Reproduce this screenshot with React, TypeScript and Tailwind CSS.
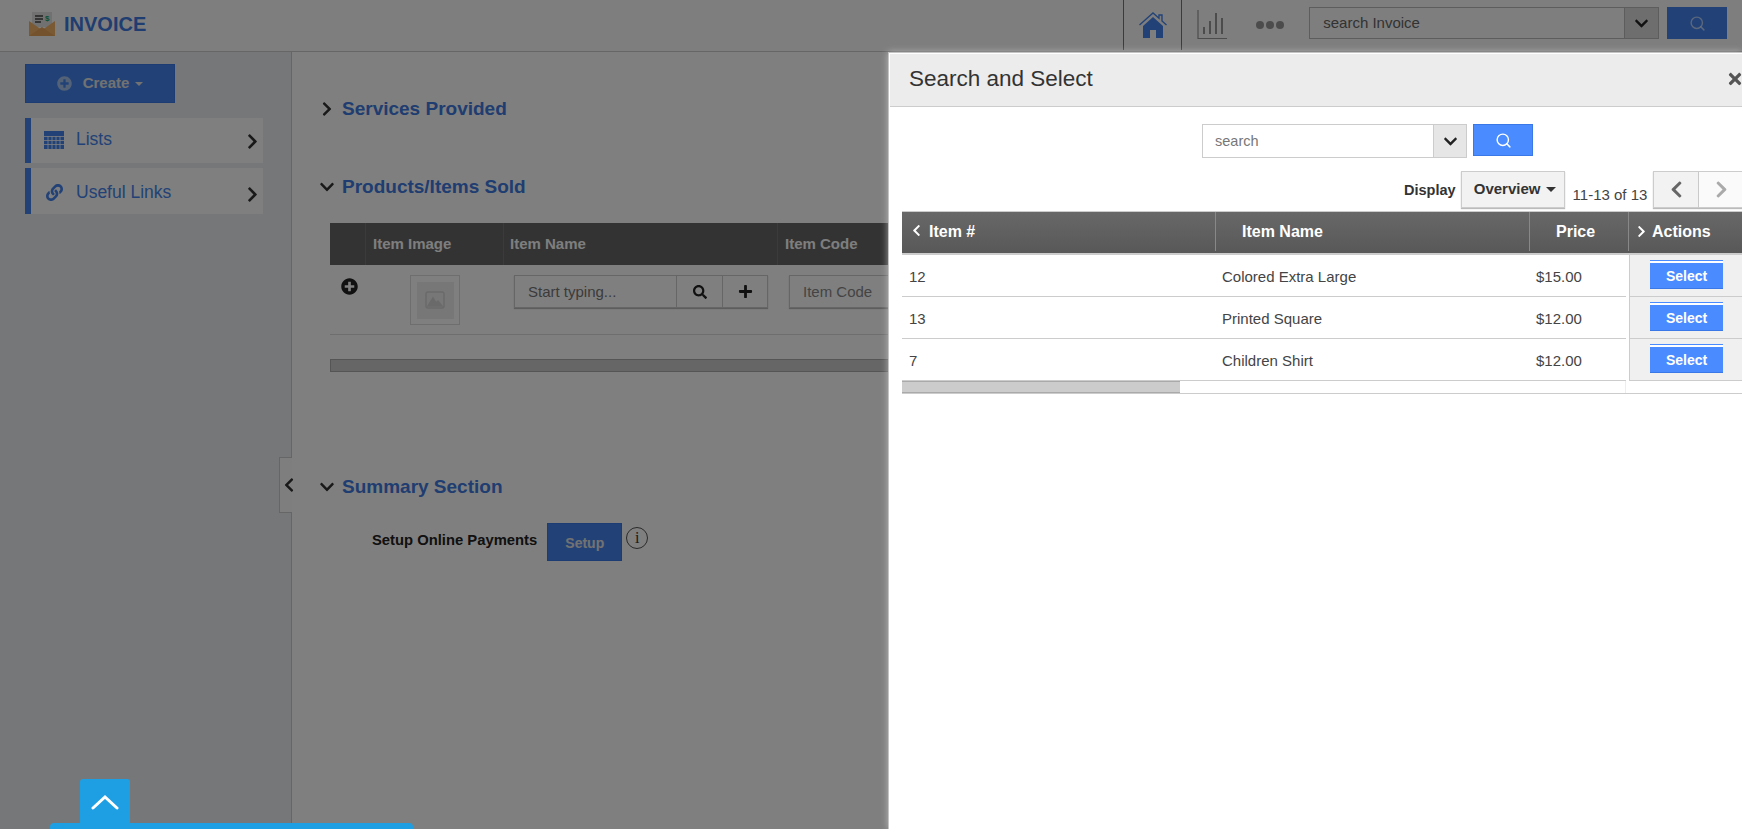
import { Search } from 'lucide-react'
import { FaChevronDown, FaChevronLeft, FaChevronRight, FaLink, FaPlus, FaPlusCircle, FaSearch, FaTimes } from 'react-icons/fa'

const rows = [
  { id: '12', name: 'Colored Extra Large', price: '$15.00' },
  { id: '13', name: 'Printed Square', price: '$12.00' },
  { id: '7', name: 'Children Shirt', price: '$12.00' },
]

function Logo() {
  return (
    <svg width="26" height="24" viewBox="0 0 26 24">
      <rect x="3" y="0" width="20" height="15" fill="#e3e3e3" />
      <path d="M6 4h8M6 7h8M6 10h6" stroke="#444" strokeWidth="1.4" />
      <text x="16" y="9" fontSize="8" fontWeight="700" fill="#16a36b" fontFamily="Liberation Sans">$</text>
      <path d="M0 9 L13 18 L26 9 V24 H0Z" fill="#f2b56b" />
      <path d="M0 24 L13 15 L26 24Z" fill="#e8a55a" />
    </svg>
  )
}

function HomeIcon() {
  return (
    <svg width="28" height="26" viewBox="0 0 28 26" fill="#4585ee">
      <path d="M0.5 13 L14 1 L20 6.3 V3 H23 V9 L27.5 13" fill="none" stroke="#4585ee" strokeWidth="1.4" />
      <path d="M14 5 L24 14 V26 H17 V18 H11 V26 H4 V14Z" />
    </svg>
  )
}

function ChartIcon() {
  return (
    <svg width="30" height="30" viewBox="0 0 30 30" fill="none" stroke="#999" strokeWidth="2">
      <path d="M1 0V28.5H30" strokeWidth="1.2" />
      <path d="M7 24V17M13 24V11M19 24V3M25 24V8" />
    </svg>
  )
}

function CalendarIcon() {
  return (
    <svg width="20" height="18" viewBox="0 0 20 18">
      <rect width="20" height="18" fill="#4585ee" />
      <path d="M0 5.5H20M0 9.5H20M0 13.5H20M4 5V18M8 5V18M12 5V18M16 5V18" stroke="#fff" strokeWidth="0.8" />
    </svg>
  )
}

function SideItem({ icon, label, className }: { icon: React.ReactNode; label: string; className: string }) {
  return (
    <div className={`flex items-center border-l-[6px] border-[#4585ee] bg-[#fefefe] pl-[13px] pr-[2px] ${className}`}>
      <span className="flex w-[20px] justify-center">{icon}</span>
      <span className="ml-[12px] flex-1 text-[17.5px] text-[#4585ee]">{label}</span>
      <FaChevronRight className="mt-[4px] text-[17px] text-[#333]" />
    </div>
  )
}

function SectionTitle({ open, title, className }: { open?: boolean; title: string; className: string }) {
  return (
    <div className={`-ml-px flex items-center ${className}`}>
      <span className="flex w-[23px] justify-start">
        {open ? <FaChevronDown className="text-[16px] text-[#333]" /> : <FaChevronRight className="text-[16px] text-[#333]" />}
      </span>
      <h2 className="text-[19px] font-bold text-[#3f7ae0]">{title}</h2>
    </div>
  )
}

export default function App() {
  return (
    <div className="relative h-screen w-screen overflow-hidden bg-white font-['Liberation_Sans',Arial,sans-serif] text-[14px]">
      {/* page under the dim layer */}
      <header className="flex h-[52px] items-start border-b border-[#ccc] bg-[#fdfdfd] pl-[29px]">
        <div className="mt-[9px] flex items-center">
          <Logo />
          <span className="ml-[9px] text-[20px] font-bold text-[#3f7ae0]">INVOICE</span>
        </div>
        <div className="ml-[977px] flex h-[50px]">
          <div className="flex w-[59px] items-center justify-center border-x border-[#777]">
            <HomeIcon />
          </div>
          <div className="ml-[15px] flex items-center">
            <ChartIcon />
          </div>
          <div className="ml-[29px] flex items-center gap-[2px]">
            <span className="h-[8px] w-[8px] rounded-full bg-[#999]" />
            <span className="h-[8px] w-[8px] rounded-full bg-[#999]" />
            <span className="h-[8px] w-[8px] rounded-full bg-[#999]" />
          </div>
          <div className="ml-[25px] mt-[7px] flex h-[32px] w-[350px] border border-[#bbb]">
            <span className="flex-1 pl-[13px] text-[15px] leading-[30px] text-[#666]">search Invoice</span>
            <span className="flex w-[34px] items-center justify-center border-l border-[#bbb] bg-[#ddd]">
              <FaChevronDown className="text-[15px] text-[#222]" />
            </span>
          </div>
          <div className="ml-[8px] mt-[7px] flex h-[32px] w-[60px] items-center justify-center bg-[#4585ee]">
            <Search size={17} className="text-white/60" />
          </div>
        </div>
      </header>

      <div className="flex h-[calc(100vh-52px)]">
        <aside className="relative w-[292px] shrink-0 border-r border-[#ccc] bg-[#eceef2] pl-[25px] pt-[12px]">
          <div className="flex h-[39px] w-[150px] items-center justify-center border border-[#3a78e8] bg-[#4585ee] text-[15px] font-bold text-[#e4e4e4]">
            <FaPlusCircle className="mr-[11px] text-[15px] text-[#a9c4f0]" />
            Create
            <span className="ml-[6px] h-0 w-0 border-x-[4px] border-t-[4px] border-x-transparent border-t-[#e4e4e4]" />
          </div>
          <SideItem className="mt-[15px] h-[45px] w-[238px] pb-[2px]" icon={<CalendarIcon />} label="Lists" />
          <SideItem
            className="mt-[5px] h-[46px] w-[238px] pt-[2px]"
            icon={<FaLink className="text-[17px] text-[#4585ee]" />}
            label="Useful Links"
          />
          <div className="absolute right-[-1px] top-[405px] flex h-[56px] w-[13px] items-center border border-r-0 border-[#ccc] bg-[#fdfdfd]">
            <FaChevronLeft className="ml-[1px] shrink-0 text-[16px] text-[#333]" />
          </div>
        </aside>

        <main className="min-w-0 flex-1 pl-[28px]">
          <SectionTitle className="mt-[44px] h-[26px]" title="Services Provided" />
          <SectionTitle className="mt-[52px] h-[26px]" open title="Products/Items Sold" />

          <div className="ml-[10px] mt-[23px] w-[900px]">
            <div className="grid h-[42px] grid-cols-[36px_138px_274px_1fr] items-center bg-[#666] text-[15px] font-bold text-[#fcfcfc]">
              <span className="h-full border-r border-[#777]" />
              <span className="flex h-full items-center border-r border-[#777] pl-[7px]">Item Image</span>
              <span className="flex h-full items-center border-r border-[#777] pl-[6px]">Item Name</span>
              <span className="pl-[7px]">Item Code</span>
            </div>
            <div className="flex h-[70px] items-start border-b border-[#ddd]">
              <FaPlusCircle className="ml-[11px] mt-[13px] text-[17px] text-[#222]" />
              <div className="ml-[52px] mt-[10px] flex h-[50px] w-[50px] items-center justify-center border border-[#ddd]">
                <div className="flex h-[37px] w-[37px] items-center justify-center bg-[#eee]">
                  <svg width="20" height="18" viewBox="0 0 20 18" fill="none" stroke="#d5d5d5" strokeWidth="1.5">
                    <rect x="1" y="1" width="18" height="16" rx="2" />
                    <path d="M3 15 L8 7 L11 12 L13 10 L17 15Z" fill="#d5d5d5" />
                  </svg>
                </div>
              </div>
              <div className="ml-[54px] mt-[10px] flex h-[33px] w-[254px] border border-[#ccc] shadow-[0_1px_1px_#bbb]">
                <span className="w-[161px] pl-[13px] text-[15px] leading-[31px] text-[#777]">Start typing...</span>
                <span className="flex w-[46px] items-center justify-center border-l border-[#ccc]">
                  <FaSearch className="text-[14px] text-[#222]" />
                </span>
                <span className="flex flex-1 items-center justify-center border-l border-[#ccc]">
                  <FaPlus className="text-[15px] text-[#222]" />
                </span>
              </div>
              <div className="ml-[21px] mt-[10px] h-[33px] flex-1 border border-[#ccc] pl-[13px] text-[15px] leading-[31px] text-[#888] shadow-[0_1px_1px_#bbb]">
                Item Code
              </div>
            </div>
            <div className="mt-[24px] h-[13px] border border-[#aaa] bg-[#ccc]" />
          </div>

          <SectionTitle className="mt-[102px] h-[26px]" open title="Summary Section" />
          <div className="ml-[52px] mt-[23px] flex items-start">
            <span className="mt-[6px] text-[14.8px] font-bold text-[#222]">Setup Online Payments</span>
            <span className="ml-[10px] flex h-[38px] w-[75px] items-center justify-center border border-[#3a78e8] bg-[#4585ee] pt-[3px] text-[14px] font-bold text-[#e4e4e4]">
              Setup
            </span>
            <span className="ml-[4px] mt-[4px] flex h-[22px] w-[22px] items-center justify-center rounded-full border border-[#555] font-['Liberation_Serif',serif] text-[16px] text-[#333]">
              i
            </span>
          </div>
        </main>
      </div>

      {/* chat launcher stays bright, so it sits above the dim layer */}
      <div className="absolute inset-0 bg-[#00000080]" />
      <div className="absolute bottom-0 left-[80px] flex h-[50px] w-[50px] justify-center rounded-t-[3px] bg-[#1e9fe3] pt-[15px]">
        <svg width="28" height="16" viewBox="0 0 28 16" fill="none" stroke="#fff" strokeWidth="3" strokeLinecap="round">
          <path d="M2 14 L14 3 L26 14" />
        </svg>
      </div>
      <div className="absolute bottom-0 left-[50px] h-[6px] w-[363px] rounded-t-[4px] bg-[#1e9fe3]" />

      {/* slide-over panel */}
      <section className="absolute bottom-0 left-[888px] right-0 top-[52px] overflow-hidden border-l border-t border-[#c4c4c4] bg-white pl-px pt-px shadow-[0_0_7px_rgba(205,205,205,0.7)]">
        <div className="flex h-[53px] items-center justify-between border-b border-[#ccc] bg-[#ececec] pb-[2px] pl-[19px]">
          <span className="text-[22.5px] text-[#333]">Search and Select</span>
          <FaTimes className="mr-[-2px] text-[18px] text-[#555]" />
        </div>

        <div className="ml-[312px] mt-[17px] flex items-start">
          <div className="flex h-[34px] w-[265px] border border-[#ccc]">
            <span className="flex-1 pl-[12px] text-[14.5px] leading-[32px] text-[#777]">search</span>
            <span className="flex w-[33px] items-center justify-center border-l border-[#ccc] bg-[#e6e6e6]">
              <FaChevronDown className="text-[15px] text-[#222]" />
            </span>
          </div>
          <div className="ml-[6px] flex h-[32px] w-[60px] items-center justify-center border border-[#3a78e8] bg-[#4a8cff]">
            <Search size={17} className="text-white" />
          </div>
        </div>

        <div className="ml-[514px] mt-[13px] flex h-[37px] items-start whitespace-nowrap">
          <span className="mt-[9px] text-[14.5px] font-bold text-[#333]">Display</span>
          <div className="ml-[5px] flex h-[37px] w-[104px] shrink-0 items-center justify-center border border-[#ccc] bg-[#f2f2f2] pl-[5px] text-[15px] font-bold text-[#333] shadow-[0_1px_1px_#bbb]">
            Overview
            <span className="ml-[6px] h-0 w-0 border-x-[5px] border-t-[5px] border-x-transparent border-t-[#333]" />
          </div>
          <span className="ml-[8px] mt-[13px] text-[15px] text-[#444]">11-13 of 13</span>
          <div className="ml-[6px] flex h-[37px] w-[46px] shrink-0 items-center justify-center border border-[#ccc] bg-[#f2f2f2] shadow-[0_1px_1px_#bbb]">
            <FaChevronLeft className="text-[19px] text-[#666]" />
          </div>
          <div className="flex h-[37px] w-[46px] shrink-0 items-center justify-center border border-l-0 border-[#ccc] bg-[#fafafa] shadow-[0_1px_1px_#bbb]">
            <FaChevronRight className="text-[19px] text-[#aaa]" />
          </div>
        </div>

        <div className="ml-[12px] mt-[3px] w-[840px]">
          <div className="grid h-[44px] grid-cols-[314px_314px_99px_113px] border-t border-b-[2px] border-[#ccc] bg-gradient-to-b from-[#686868] to-[#585858] pb-[2px] text-[16px] font-bold text-white">
            <span className="flex items-center border-r border-[#888] pl-[8px]">
              <FaChevronLeft className="mb-[2px] text-[13px]" />
              <span className="ml-[6px]">Item #</span>
            </span>
            <span className="flex items-center border-r border-[#888] pl-[26px]">Item Name</span>
            <span className="flex items-center border-r border-[#888] pl-[26px]">Price</span>
            <span className="flex items-center pl-[6px]">
              <FaChevronRight className="mb-[1px] text-[13px]" />
              <span className="ml-[4px]">Actions</span>
            </span>
          </div>
          {rows.map((row) => (
            <div key={row.id} className="grid h-[42px] grid-cols-[724px_116px] text-[15px] text-[#444]">
              <div className="grid grid-cols-[320px_314px_90px] items-center border-b border-[#ccc] pt-[3px]">
                <span className="pl-[7px]">{row.id}</span>
                <span>{row.name}</span>
                <span>{row.price}</span>
              </div>
              <div className="ml-[3px] flex justify-start border-b border-l border-[#ccc] bg-[#f0f0f0] pl-[20px] pt-[6px]">
                <span className="flex h-[28px] w-[73px] items-center justify-center border-t-2 border-b border-t-white border-b-[#3a78e8] bg-[#4a8cff] pt-[1px] text-[14px] font-bold text-white shadow-[0_-1px_0_#4a8cff]">
                  Select
                </span>
              </div>
            </div>
          ))}
          <div className="w-[724px] border-r border-[#eee]">
            <div className="h-[12px] w-[278px] border-y border-[#aaa] bg-[#ccc]" />
          </div>
          <div className="h-px bg-[#ccc]" />
        </div>
      </section>
    </div>
  )
}
